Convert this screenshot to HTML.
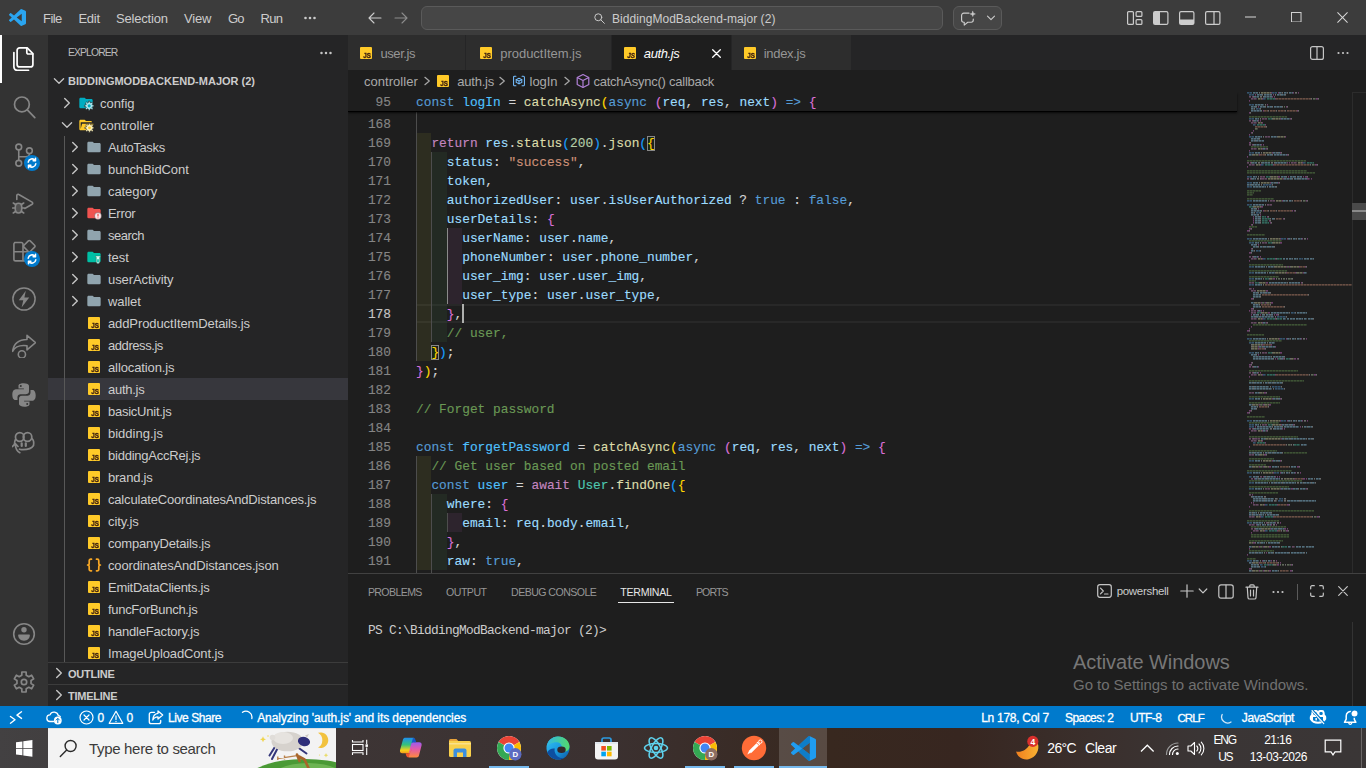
<!DOCTYPE html>
<html lang="en">
<head>
<meta charset="utf-8">
<title>auth.js - BiddingModBackend-major (2) - Visual Studio Code</title>
<style>
*{box-sizing:border-box;margin:0;padding:0}
html,body{width:1366px;height:768px;overflow:hidden;background:#1e1e1e}
body{font-family:"Liberation Sans",sans-serif;font-size:13px;color:#cccccc;position:relative}
.abs{position:absolute}
svg{display:block}
/* ---------- title bar ---------- */
#titlebar{position:absolute;left:0;top:0;width:1366px;height:35px;background:#3c3c3c}
#titlebar .menu{position:absolute;top:1px;height:35px;line-height:35px;font-size:13px;color:#cccccc;white-space:nowrap;letter-spacing:-0.1px}
#cmd{position:absolute;left:421px;top:6px;width:522px;height:24px;background:#464646;border:1px solid #5a5a5a;border-radius:6px}
#cmd span{position:absolute;left:190px;top:1px;line-height:22px;font-size:12px;color:#cccccc;white-space:nowrap;letter-spacing:0.05px}
#chatbtn{position:absolute;left:953px;top:6px;width:49px;height:24px;background:#464646;border:1px solid #5a5a5a;border-radius:6px}
/* ---------- activity bar ---------- */
#activity{position:absolute;left:0;top:35px;width:48px;height:671px;background:#333333}
#activity .ind{position:absolute;left:0;top:0;width:2px;height:48px;background:#ffffff}
#activity .ic{position:absolute;left:12px;width:24px;height:24px}
.badge{position:absolute;width:16px;height:16px;border-radius:8px;background:#007acc}
/* ---------- sidebar ---------- */
#sidebar{position:absolute;left:48px;top:35px;width:300px;height:671px;background:#252526;overflow:hidden}
#sidebar .title{position:absolute;left:20px;top:0;line-height:36px;font-size:10.4px;color:#bbbbbb;letter-spacing:-0.899px}
.sect{position:absolute;left:0;width:300px;height:22px;line-height:22px;font-size:11px;font-weight:700;color:#cccccc;white-space:nowrap}
.sect span{position:absolute;left:20px;top:0}
.row{position:absolute;left:0;width:300px;height:22px;line-height:22px;font-size:13px;color:#cccccc;white-space:nowrap}
.row .lbl{position:absolute;top:1px;letter-spacing:-0.16px}
.row .chev{position:absolute;top:3px;width:16px;height:16px}
.row .fi{position:absolute;top:3px;width:16px;height:16px}
.row.sel{background:#37373d}
.js{position:absolute;top:5px;width:12px;height:12px;background:#ffca28;border-radius:1px}
.js b{-webkit-text-stroke:0.3px;position:absolute;right:0.2px;bottom:-1px;padding:0 1px;font-size:7.4px;line-height:7.6px;font-weight:700;color:#3a1d10;letter-spacing:-0.2px;transform-origin:100% 100%;transform:translateZ(0) scaleX(0.86);font-family:"Liberation Sans",sans-serif}
/* ---------- editor ---------- */
#tabs{position:absolute;left:348px;top:35px;width:1018px;height:35px;background:#252526}
.tab{position:absolute;top:0;height:35px;background:#2d2d2d;border-right:1px solid #252526;line-height:35px;font-size:13px;color:#969696;white-space:nowrap}
.tab.act{background:#1e1e1e;color:#ffffff;font-style:italic}
.tab .t{position:absolute;top:1px}
#crumbs{position:absolute;left:348px;top:70px;width:1018px;height:22px;background:#1e1e1e;line-height:22px;font-size:13px;color:#a9a9a9;white-space:nowrap}
#crumbs span{position:absolute;top:1px;letter-spacing:-0.12px}
#editor{position:absolute;left:348px;top:92px;width:1018px;height:481px;background:#1e1e1e;overflow:hidden}
.ln{-webkit-text-stroke:0.13px;position:absolute;left:0;width:1018px;height:19px;line-height:19px;font-family:"Liberation Mono",monospace;font-size:12.83px;white-space:pre;color:#d4d4d4}
.ln .n{position:absolute;top:1px;left:0;width:43px;text-align:right;color:#858585}
.ln .n.cur{color:#c6c6c6}
.ln .c{position:absolute;left:68px;top:1px}
.ir{position:absolute;top:0;height:19px;width:15.4px}
.k{color:#569cd6}.p{color:#c586c0}.v{color:#9cdcfe}.f{color:#dcdcaa}.m{color:#b5cea8}.s{color:#ce9178}.cm{color:#6a9955}.ty{color:#4ec9b0}.cv{color:#4fc1ff}
.bm{outline:1px solid #888888;outline-offset:-1px;background:rgba(0,100,0,0.1)}
.b1{color:#ffd700}.b2{color:#da70d6}.b3{color:#179fff}
/* ---------- panel ---------- */
#panel{position:absolute;left:348px;top:573px;width:1018px;height:133px;background:#1e1e1e;border-top:1px solid #414141}
#panel .pt{position:absolute;top:7px;line-height:22px;font-size:10.6px;color:#969696;white-space:nowrap;letter-spacing:-0.35px}
#panel .pt.act{color:#e7e7e7}
/* ---------- status bar ---------- */
#status{position:absolute;left:0;top:706px;width:1366px;height:22px;background:#007acc;color:#ffffff;font-size:12px;line-height:22px;white-space:nowrap}
#status span{position:absolute;top:1px;-webkit-text-stroke:0.3px}
/* ---------- task bar ---------- */
#taskbar{position:absolute;left:0;top:728px;width:1366px;height:40px;background:linear-gradient(90deg,#434142 0,#423f40 48px,#3d3535 340px,#3b3131 600px,#38281f 830px,#372620 960px,#3a2f2c 1090px,#3a3535 1200px,#3a3636 1366px);overflow:hidden}
</style>
</head>
<body>
<div id="titlebar">
<svg class="abs" style="left:9px;top:9px" width="17" height="17" viewBox="0 0 100 100"><path d="M96.5 10.8 75.9.9a6.2 6.2 0 0 0-7.1 1.2L29.4 38 12.2 25a4.2 4.2 0 0 0-5.3.2L1.400 30.200a4.200 4.200 0 0 0 0 6.200L16.300 50 1.400 63.600a4.200 4.200 0 0 0 0 6.200l5.500 5a4.200 4.200 0 0 0 5.300.200l17.200-13 39.400 35.900a6.200 6.200 0 0 0 7.100 1.200l20.600-9.900A6.200 6.200 0 0 0 100 83.600V16.400a6.200 6.200 0 0 0-3.500-5.600zM75 72.700 45.100 50 75 27.300z" fill="#2aa5f0"/></svg>
<div class="menu" style="left:43px;letter-spacing:-0.563px">File</div>
<div class="menu" style="left:78.5px;letter-spacing:-0.302px">Edit</div>
<div class="menu" style="left:116px;letter-spacing:-0.198px">Selection</div>
<div class="menu" style="left:184px;letter-spacing:-0.188px">View</div>
<div class="menu" style="left:228px;letter-spacing:-0.822px">Go</div>
<div class="menu" style="left:260.5px;letter-spacing:-0.72px">Run</div>
<svg class="abs" style="left:304px;top:16px" width="12" height="4" viewBox="0 0 12 4"><circle cx="1.500" cy="2" r="1.300" fill="#ccc"/><circle cx="6" cy="2" r="1.300" fill="#ccc"/><circle cx="10.500" cy="2" r="1.300" fill="#ccc"/></svg>
<svg class="abs" style="left:367px;top:10px" width="16" height="16" viewBox="0 0 16 16" fill="none" stroke="#cccccc" stroke-width="1.100" stroke-linecap="round" stroke-linejoin="round"><path d="M14 8H2.200M7 3 2 8l5 5"/></svg>
<svg class="abs" style="left:393px;top:10px" width="16" height="16" viewBox="0 0 16 16" fill="none" stroke="#8c8c8c" stroke-width="1.100" stroke-linecap="round" stroke-linejoin="round"><path d="M2 8h11.800M9 3l5 5-5 5"/></svg>
<div id="cmd"><svg class="abs" style="left:171px;top:5px" width="13" height="13" viewBox="0 0 16 16" fill="none" stroke="#cccccc" stroke-width="1.200" stroke-linecap="round"><circle cx="6.500" cy="6.500" r="4.300"/><path d="M9.700 9.700 14 14"/></svg><span>BiddingModBackend-major (2)</span></div>
<div id="chatbtn"><svg class="abs" style="left:6px;top:3px" width="17" height="17" viewBox="0 0 16 16" fill="none" stroke="#cccccc" stroke-width="1.100" stroke-linecap="round" stroke-linejoin="round"><path d="M8.500 3H3.500a2 2 0 0 0-2 2v4.500a2 2 0 0 0 2 2H4v2.700l3.300-2.700h3.200a2 2 0 0 0 2-2V8.500"/><path d="M12 1.200l.7 1.800 1.800.7-1.800.7-.700 1.800-.700-1.800-1.800-.700 1.800-.700z" fill="#cccccc" stroke-width="0.400"/></svg>
<svg class="abs" style="left:32px;top:7px" width="10" height="8" viewBox="0 0 10 8" fill="none" stroke="#cccccc" stroke-width="1.100" stroke-linecap="round" stroke-linejoin="round"><path d="M1.500 2.200 5 5.700l3.500-3.500"/></svg></div>
<svg class="abs" style="left:1127px;top:11px" width="16" height="14" viewBox="0 0 16 14" fill="none" stroke="#cccccc" stroke-width="1.200"><rect x="0.600" y="0.600" width="5.800" height="12.800" rx="1"/><rect x="9.100" y="0.600" width="5.800" height="4.800" rx="1"/><rect x="9.100" y="8.600" width="5.800" height="4.800" rx="1"/></svg>
<svg class="abs" style="left:1153px;top:11px" width="16" height="14" viewBox="0 0 16 14" fill="none" stroke="#cccccc" stroke-width="1.200"><rect x="0.600" y="0.600" width="14.300" height="12.800" rx="1.500"/><path d="M1 1h6v12H1z" fill="#cccccc" stroke="none"/></svg>
<svg class="abs" style="left:1179px;top:11px" width="16" height="14" viewBox="0 0 16 14" fill="none" stroke="#cccccc" stroke-width="1.200"><rect x="0.600" y="0.600" width="14.300" height="12.800" rx="1.500"/><path d="M1 8.500h14V13H1z" fill="#cccccc" stroke="none"/></svg>
<svg class="abs" style="left:1205px;top:11px" width="16" height="14" viewBox="0 0 16 14" fill="none" stroke="#cccccc" stroke-width="1.200"><rect x="0.600" y="0.600" width="14.300" height="12.800" rx="1.500"/><path d="M9 1v12"/></svg>
<svg class="abs" style="left:1245px;top:15.500px" width="11" height="2" viewBox="0 0 11 2"><rect width="11" height="1" y="0.500" fill="#d8d8d8"/></svg>
<svg class="abs" style="left:1291px;top:11.500px" width="10.500" height="10.500" viewBox="0 0 11 11" fill="none" stroke="#d8d8d8" stroke-width="1"><rect x="0.500" y="0.500" width="10" height="10"/></svg>
<svg class="abs" style="left:1337px;top:11.500px" width="11" height="11" viewBox="0 0 12 12" fill="none" stroke="#d8d8d8" stroke-width="1.100"><path d="M0.500 0.500l11 11M11.500 0.500l-11 11"/></svg>
</div>
<div id="activity">
<div class="ind"></div>
<svg class="ic" style="top:12px" viewBox="0 0 24 24" fill="none" stroke="#ffffff" stroke-width="1.700" stroke-linejoin="round" stroke-linecap="round"><path d="M7.600 0.900h7.600l5.700 5.700v10.800a2.500 2.500 0 0 1-2.500 2.500H7.600a2.500 2.500 0 0 1-2.500-2.500V3.400a2.500 2.500 0 0 1 2.500-2.500z"/><path d="M14.800 1.200v4.300a1.500 1.500 0 0 0 1.500 1.500h4.300"/><path d="M1.900 5.500v14.500a3.300 3.300 0 0 0 3.300 3.300h11.300"/></svg>
<svg class="ic" style="top:60px" viewBox="0 0 24 24" fill="none" stroke="#868686" stroke-width="1.700" stroke-linecap="round"><circle cx="9.900" cy="9.400" r="7.400"/><path d="M15.300 14.800 22.800 22.600"/></svg>
<svg class="ic" style="top:108px" viewBox="0 0 24 24" fill="none" stroke="#868686" stroke-width="1.600" stroke-linecap="round"><circle cx="6.750" cy="4" r="2.900"/><circle cx="6.750" cy="20.250" r="2.900"/><circle cx="17.400" cy="7.750" r="2.900"/><path d="M6.750 7v10.300M17.400 10.700c0 2.200-1.500 3-3.500 3H6.750"/></svg>
<div class="badge" style="left:24px;top:120px"><svg width="16" height="16" viewBox="0 0 16 16" fill="none" stroke="#ffffff" stroke-width="1.500" stroke-linecap="round" stroke-linejoin="round"><path d="M4.200 7.200A3.900 3.900 0 0 1 11.200 5.500M11.800 8.800A3.900 3.900 0 0 1 4.800 10.500"/><path d="M11.500 3.300v2.400H9.100M4.500 12.700v-2.400h2.400"/></svg></div>
<svg class="ic" style="top:156px" viewBox="0 0 24 24" fill="none" stroke="#868686" stroke-width="1.600" stroke-linejoin="round" stroke-linecap="round"><path d="M4.800 8.500V4.600a1.300 1.300 0 0 1 2-1.100l13.300 7.600a1.200 1.200 0 0 1 0 2.100l-7.300 4.300"/><path d="M3.300 15.500a3.200 3.200 0 0 1 6.400 0v3.300a3.200 3.200 0 0 1-6.400 0z" fill="#868686" fill-opacity="0.350"/><path d="M3.300 17H0.700M9.700 17h2.600M3.600 13.500 1.300 12M9.400 13.500l2.300-1.500M3.600 20.300 1.300 22M9.400 20.300l2.300 1.700"/></svg>
<svg class="ic" style="top:204px" viewBox="0 0 24 24" fill="none" stroke="#868686" stroke-width="1.600" stroke-linejoin="round"><path d="M2.600 3.500h6.700a1.700 1.700 0 0 1 1.700 1.700v7.600H1.900V5.200a1.700 1.700 0 0 1 1.700-1.700zM1.900 12.800H11v9.100H3.600a1.700 1.700 0 0 1-1.700-1.700zM11 12.800h7.400a1.700 1.700 0 0 1 1.700 1.700v5.700a1.700 1.700 0 0 1-1.700 1.700H11z"/><path d="M18.200 1.900l4.400 4.400a1.300 1.300 0 0 1 0 1.800l-4.400 4.400a1.300 1.300 0 0 1-1.800 0L12 8.100a1.300 1.300 0 0 1 0-1.800l4.400-4.400a1.300 1.300 0 0 1 1.800 0z"/></svg>
<div class="badge" style="left:24px;top:216px"><svg width="16" height="16" viewBox="0 0 16 16" fill="none" stroke="#ffffff" stroke-width="1.500" stroke-linecap="round" stroke-linejoin="round"><path d="M4.200 7.200A3.900 3.900 0 0 1 11.200 5.500M11.800 8.800A3.900 3.900 0 0 1 4.800 10.500"/><path d="M11.500 3.300v2.400H9.100M4.500 12.700v-2.400h2.400"/></svg></div>
<svg class="ic" style="top:251.500px" viewBox="0 0 24 24" fill="none" stroke="#868686" stroke-width="1.500"><circle cx="12" cy="12" r="11.100"/><path d="M13.800 3.800 6.800 13.300h4.500l-1.700 7.200 7.600-10h-4.800z" fill="#868686" stroke="none"/></svg>
<svg class="ic" style="top:299px" viewBox="0 0 24 24" fill="none" stroke="#868686" stroke-width="1.600" stroke-linejoin="round" stroke-linecap="round"><path d="M15 1.300 23.600 8.600 15 15.900V11.700C8.500 10.900 3.500 11.500 0.600 17.300 1.500 10 6 5.800 15 5.500z"/><circle cx="9.900" cy="20.400" r="3.600"/></svg>
<svg class="ic" style="top:348px" viewBox="0 0 24 24" fill="#868686"><path d="M11.800 0.300c-5.700 0-5.300 2.500-5.300 2.500v2.600h5.400v.8H4.300S0.300 5.700 0.300 11.500s3.200 5.600 3.200 5.600h2v-2.700s-.1-3.200 3.100-3.200h5.400s3 0 3-2.900V3.400s.5-3.100-5.200-3.100zM8.800 2a1 1 0 1 1 0 2 1 1 0 0 1 0-2z"/><path d="M12.200 23.700c5.700 0 5.300-2.500 5.300-2.500v-2.600h-5.400v-.8h7.600s4 .5 4-5.300-3.200-5.600-3.200-5.600h-2v2.700s.1 3.200-3.100 3.200H10s-3 0-3 2.900v4.900s-.5 3.100 5.200 3.100zm3-1.700a1 1 0 1 1 0-2 1 1 0 0 1 0 2z"/></svg>
<svg class="ic" style="top:396px" viewBox="0 0 24 24" fill="none" stroke="#868686" stroke-width="1.700" stroke-linejoin="round" stroke-linecap="round"><circle cx="7.750" cy="6" r="4.300"/><circle cx="15.500" cy="6" r="4.300"/><path d="M3.500 8.500c-.8 1.500-1 3-1 4.500M20 7.500c1.500 1.500 2 4.500 1.500 7-1.500 2.500-6 4.200-10.500 4.200-1.500 0-2.500-.2-3.500-.5"/><path d="M9.700 12.300v2.700M13.800 12.300v2.700" stroke-width="2.200"/><path d="M7.800 21.700c-3-1.500-4.300-4.500-4.500-8.500M0.500 15.500 3.300 12.700 6 15.500"/></svg>
<svg class="ic" style="top:587px" viewBox="0 0 24 24" fill="none" stroke="#868686" stroke-width="1.600"><circle cx="12" cy="12" r="10.300"/><circle cx="12" cy="7.750" r="2.700" fill="#868686" stroke="none"/><path d="M6.750 12.400h10.500a.600.600 0 0 1 .600.600c0 3.200-2.300 5.700-5.850 5.700S6.150 16.200 6.150 13a.600.600 0 0 1 .600-.600z" fill="#868686" stroke="none"/></svg>
<svg class="ic" style="top:635px" viewBox="0 0 24 24" fill="none" stroke="#868686" stroke-width="1.700" stroke-linejoin="round"><circle cx="12" cy="12" r="2.700"/><path d="M9.88 2.02 L14.12 2.02 L14.22 5.15 L16.82 6.65 L19.58 5.17 L21.70 8.85 L19.04 10.50 L19.04 13.50 L21.70 15.15 L19.58 18.83 L16.82 17.35 L14.22 18.85 L14.12 21.98 L9.88 21.98 L9.78 18.85 L7.18 17.35 L4.42 18.83 L2.30 15.15 L4.96 13.50 L4.96 10.50 L2.30 8.85 L4.42 5.17 L7.18 6.65 L9.78 5.15Z"/></svg>
</div>
<div id="sidebar">
<div class="title">EXPLORER</div>
<svg class="abs" style="left:271.500px;top:16px" width="12" height="4" viewBox="0 0 12 4"><circle cx="1.500" cy="2" r="1.250" fill="#c5c5c5"/><circle cx="6" cy="2" r="1.250" fill="#c5c5c5"/><circle cx="10.500" cy="2" r="1.250" fill="#c5c5c5"/></svg>
<div class="sect" style="top:35px"><svg class="abs" width="16" height="16" style="left:3px;top:3px" viewBox="0 0 16 16" fill="none" stroke="#c5c5c5" stroke-width="1.300" stroke-linecap="round" stroke-linejoin="round"><path d="M3.400 5.700 8 10.300 12.600 5.700"/></svg><span>BIDDINGMODBACKEND-MAJOR (2)</span></div>
<div class="row" style="top:57px"><svg class="chev" style="left:11px" viewBox="0 0 16 16" fill="none" stroke="#c5c5c5" stroke-width="1.400" stroke-linecap="round" stroke-linejoin="round"><path d="M5.700 3.400 10.300 8 5.700 12.600"/></svg><svg class="fi" style="left:30px" viewBox="0 0 24 24"><path d="M10 4H4c-1.110 0-2 .890-2 2v12a2 2 0 0 0 2 2h16a2 2 0 0 0 2-2V8c0-1.110-.900-2-2-2h-8l-2-2z" fill="#00acc1"/><path d="M23.91 15.17 L23.91 17.43 L21.86 17.51 L21.23 19.02 L22.62 20.53 L21.03 22.12 L19.52 20.73 L18.01 21.36 L17.93 23.41 L15.67 23.41 L15.59 21.36 L14.08 20.73 L12.57 22.12 L10.98 20.53 L12.37 19.02 L11.74 17.51 L9.69 17.43 L9.69 15.17 L11.74 15.09 L12.37 13.58 L10.98 12.07 L12.57 10.48 L14.08 11.87 L15.59 11.24 L15.67 9.19 L17.93 9.19 L18.01 11.24 L19.52 11.87 L21.03 10.48 L22.62 12.07 L21.23 13.58 L21.86 15.09Z" fill="#a8e8f0" stroke="#252526" stroke-width="0.900"/><circle cx="16.800" cy="16.300" r="2.300" fill="#00acc1"/></svg><span class="lbl" style="left:52px;letter-spacing:-0.034px">config</span></div>
<div class="row" style="top:79px"><svg class="chev" style="left:11px" viewBox="0 0 16 16" fill="none" stroke="#c5c5c5" stroke-width="1.300" stroke-linecap="round" stroke-linejoin="round"><path d="M3.400 5.700 8 10.300 12.600 5.700"/></svg><svg class="fi" style="left:30px" viewBox="0 0 24 24"><path d="M19 20H4c-1.110 0-2-.900-2-2V6c0-1.110.890-2 2-2h6l2 2h7a2 2 0 0 1 2 2H4v10l2.140-8h17.070l-2.280 8.500c-.230.870-1.010 1.500-1.930 1.500z" fill="#ffca28"/><path d="M24.11 15.20 L24.11 17.40 L22.06 17.47 L21.46 18.91 L22.86 20.41 L21.31 21.96 L19.81 20.56 L18.37 21.16 L18.30 23.21 L16.10 23.21 L16.03 21.16 L14.59 20.56 L13.09 21.96 L11.54 20.41 L12.94 18.91 L12.34 17.47 L10.29 17.40 L10.29 15.20 L12.34 15.13 L12.94 13.69 L11.54 12.19 L13.09 10.64 L14.59 12.04 L16.03 11.44 L16.10 9.39 L18.30 9.39 L18.37 11.44 L19.81 12.04 L21.31 10.64 L22.86 12.19 L21.46 13.69 L22.06 15.13Z" fill="#fff3b8" stroke="#252526" stroke-width="0.900"/><circle cx="17.200" cy="16.300" r="2.200" fill="#ffca28"/></svg><span class="lbl" style="left:52px;letter-spacing:0.063px">controller</span></div>
<div class="row" style="top:101px"><svg class="chev" style="left:19px" viewBox="0 0 16 16" fill="none" stroke="#c5c5c5" stroke-width="1.400" stroke-linecap="round" stroke-linejoin="round"><path d="M5.700 3.400 10.300 8 5.700 12.600"/></svg><svg class="fi" style="left:38px" viewBox="0 0 24 24"><path d="M10 4H4c-1.110 0-2 .890-2 2v12a2 2 0 0 0 2 2h16a2 2 0 0 0 2-2V8c0-1.110-.900-2-2-2h-8l-2-2z" fill="#90a4ae"/></svg><span class="lbl" style="left:60px;letter-spacing:-0.354px">AutoTasks</span></div>
<div class="row" style="top:123px"><svg class="chev" style="left:19px" viewBox="0 0 16 16" fill="none" stroke="#c5c5c5" stroke-width="1.400" stroke-linecap="round" stroke-linejoin="round"><path d="M5.700 3.400 10.300 8 5.700 12.600"/></svg><svg class="fi" style="left:38px" viewBox="0 0 24 24"><path d="M10 4H4c-1.110 0-2 .890-2 2v12a2 2 0 0 0 2 2h16a2 2 0 0 0 2-2V8c0-1.110-.900-2-2-2h-8l-2-2z" fill="#90a4ae"/></svg><span class="lbl" style="left:60px;letter-spacing:-0.081px">bunchBidCont</span></div>
<div class="row" style="top:145px"><svg class="chev" style="left:19px" viewBox="0 0 16 16" fill="none" stroke="#c5c5c5" stroke-width="1.400" stroke-linecap="round" stroke-linejoin="round"><path d="M5.700 3.400 10.300 8 5.700 12.600"/></svg><svg class="fi" style="left:38px" viewBox="0 0 24 24"><path d="M10 4H4c-1.110 0-2 .890-2 2v12a2 2 0 0 0 2 2h16a2 2 0 0 0 2-2V8c0-1.110-.900-2-2-2h-8l-2-2z" fill="#90a4ae"/></svg><span class="lbl" style="left:60px;letter-spacing:-0.084px">category</span></div>
<div class="row" style="top:167px"><svg class="chev" style="left:19px" viewBox="0 0 16 16" fill="none" stroke="#c5c5c5" stroke-width="1.400" stroke-linecap="round" stroke-linejoin="round"><path d="M5.700 3.400 10.300 8 5.700 12.600"/></svg><svg class="fi" style="left:38px" viewBox="0 0 24 24"><path d="M10 4H4c-1.110 0-2 .890-2 2v12a2 2 0 0 0 2 2h16a2 2 0 0 0 2-2V8c0-1.110-.900-2-2-2h-8l-2-2z" fill="#ef5350"/><circle cx="18" cy="16.500" r="5.200" fill="#ffe6e9" stroke="#252526" stroke-width="0.500"/><path d="M18 13.200v4M18 18.700v1.300" stroke="#ef5350" stroke-width="1.900"/></svg><span class="lbl" style="left:60px;letter-spacing:-0.298px">Error</span></div>
<div class="row" style="top:189px"><svg class="chev" style="left:19px" viewBox="0 0 16 16" fill="none" stroke="#c5c5c5" stroke-width="1.400" stroke-linecap="round" stroke-linejoin="round"><path d="M5.700 3.400 10.300 8 5.700 12.600"/></svg><svg class="fi" style="left:38px" viewBox="0 0 24 24"><path d="M10 4H4c-1.110 0-2 .890-2 2v12a2 2 0 0 0 2 2h16a2 2 0 0 0 2-2V8c0-1.110-.900-2-2-2h-8l-2-2z" fill="#90a4ae"/></svg><span class="lbl" style="left:60px;letter-spacing:-0.522px">search</span></div>
<div class="row" style="top:211px"><svg class="chev" style="left:19px" viewBox="0 0 16 16" fill="none" stroke="#c5c5c5" stroke-width="1.400" stroke-linecap="round" stroke-linejoin="round"><path d="M5.700 3.400 10.300 8 5.700 12.600"/></svg><svg class="fi" style="left:38px" viewBox="0 0 24 24"><path d="M10 4H4c-1.110 0-2 .890-2 2v12a2 2 0 0 0 2 2h16a2 2 0 0 0 2-2V8c0-1.110-.900-2-2-2h-8l-2-2z" fill="#00bfa5"/><path d="M14.500 10.500h7v1.800h-1v7.200a2.500 2.500 0 0 1-5 0v-7.200h-1z" fill="#d2fff4" stroke="#252526" stroke-width="0.400"/><path d="M16.800 15.500h2.400v3.800a1.200 1.200 0 0 1-2.400 0z" fill="#00bfa5"/></svg><span class="lbl" style="left:60px;letter-spacing:-0.042px">test</span></div>
<div class="row" style="top:233px"><svg class="chev" style="left:19px" viewBox="0 0 16 16" fill="none" stroke="#c5c5c5" stroke-width="1.400" stroke-linecap="round" stroke-linejoin="round"><path d="M5.700 3.400 10.300 8 5.700 12.600"/></svg><svg class="fi" style="left:38px" viewBox="0 0 24 24"><path d="M10 4H4c-1.110 0-2 .890-2 2v12a2 2 0 0 0 2 2h16a2 2 0 0 0 2-2V8c0-1.110-.900-2-2-2h-8l-2-2z" fill="#90a4ae"/></svg><span class="lbl" style="left:60px;letter-spacing:-0.089px">userActivity</span></div>
<div class="row" style="top:255px"><svg class="chev" style="left:19px" viewBox="0 0 16 16" fill="none" stroke="#c5c5c5" stroke-width="1.400" stroke-linecap="round" stroke-linejoin="round"><path d="M5.700 3.400 10.300 8 5.700 12.600"/></svg><svg class="fi" style="left:38px" viewBox="0 0 24 24"><path d="M10 4H4c-1.110 0-2 .890-2 2v12a2 2 0 0 0 2 2h16a2 2 0 0 0 2-2V8c0-1.110-.900-2-2-2h-8l-2-2z" fill="#90a4ae"/></svg><span class="lbl" style="left:60px;letter-spacing:-0.075px">wallet</span></div>
<div class="row" style="top:277px"><div class="js" style="left:40px"><b>JS</b></div><span class="lbl" style="left:60px;letter-spacing:-0.109px">addProductItemDetails.js</span></div>
<div class="row" style="top:299px"><div class="js" style="left:40px"><b>JS</b></div><span class="lbl" style="left:60px;letter-spacing:-0.435px">address.js</span></div>
<div class="row" style="top:321px"><div class="js" style="left:40px"><b>JS</b></div><span class="lbl" style="left:60px;letter-spacing:-0.118px">allocation.js</span></div>
<div class="row sel" style="top:343px"><div class="js" style="left:40px"><b>JS</b></div><span class="lbl" style="left:60px;letter-spacing:-0.273px">auth.js</span></div>
<div class="row" style="top:365px"><div class="js" style="left:40px"><b>JS</b></div><span class="lbl" style="left:60px;letter-spacing:-0.247px">basicUnit.js</span></div>
<div class="row" style="top:387px"><div class="js" style="left:40px"><b>JS</b></div><span class="lbl" style="left:60px;letter-spacing:-0.004px">bidding.js</span></div>
<div class="row" style="top:409px"><div class="js" style="left:40px"><b>JS</b></div><span class="lbl" style="left:60px;letter-spacing:-0.232px">biddingAccRej.js</span></div>
<div class="row" style="top:431px"><div class="js" style="left:40px"><b>JS</b></div><span class="lbl" style="left:60px;letter-spacing:-0.219px">brand.js</span></div>
<div class="row" style="top:453px"><div class="js" style="left:40px"><b>JS</b></div><span class="lbl" style="left:60px;letter-spacing:-0.181px">calculateCoordinatesAndDistances.js</span></div>
<div class="row" style="top:475px"><div class="js" style="left:40px"><b>JS</b></div><span class="lbl" style="left:60px;letter-spacing:-0.121px">city.js</span></div>
<div class="row" style="top:497px"><div class="js" style="left:40px"><b>JS</b></div><span class="lbl" style="left:60px;letter-spacing:-0.182px">companyDetails.js</span></div>
<div class="row" style="top:519px"><svg class="fi" style="left:38px" viewBox="0 0 16 16" fill="none" stroke="#f9a825" stroke-width="1.700" stroke-linecap="round" stroke-linejoin="round"><path d="M5.500 2.200H4.800a1.600 1.600 0 0 0-1.600 1.600v2.400c0 .900-.700 1.800-1.600 1.800.900 0 1.600.900 1.600 1.800v2.400a1.600 1.600 0 0 0 1.600 1.600h.700M10.500 2.200h.700a1.600 1.600 0 0 1 1.600 1.600v2.400c0 .900.700 1.800 1.600 1.800-.900 0-1.600.900-1.600 1.800v2.400a1.600 1.600 0 0 1-1.600 1.600h-.700"/></svg><span class="lbl" style="left:60px;letter-spacing:-0.153px">coordinatesAndDistances.json</span></div>
<div class="row" style="top:541px"><div class="js" style="left:40px"><b>JS</b></div><span class="lbl" style="left:60px;letter-spacing:-0.267px">EmitDataClients.js</span></div>
<div class="row" style="top:563px"><div class="js" style="left:40px"><b>JS</b></div><span class="lbl" style="left:60px;letter-spacing:-0.302px">funcForBunch.js</span></div>
<div class="row" style="top:585px"><div class="js" style="left:40px"><b>JS</b></div><span class="lbl" style="left:60px;letter-spacing:-0.201px">handleFactory.js</span></div>
<div class="row" style="top:607px"><div class="js" style="left:40px"><b>JS</b></div><span class="lbl" style="left:60px;letter-spacing:-0.122px">ImageUploadCont.js</span></div>
<div class="abs" style="left:16px;top:101px;width:1px;height:528px;background:#585858"></div>
<div class="sect" style="top:627px;height:22px;background:#252526;border-top:1px solid #3c3c3c"><svg class="abs" width="16" height="16" style="left:3px;top:2px" viewBox="0 0 16 16" fill="none" stroke="#c5c5c5" stroke-width="1.400" stroke-linecap="round" stroke-linejoin="round"><path d="M5.700 3.400 10.300 8 5.700 12.600"/></svg><span style="top:0;letter-spacing:-0.250px">OUTLINE</span></div>
<div class="sect" style="top:649px;height:22px;background:#252526;border-top:1px solid #3c3c3c"><svg class="abs" width="16" height="16" style="left:3px;top:2px" viewBox="0 0 16 16" fill="none" stroke="#c5c5c5" stroke-width="1.400" stroke-linecap="round" stroke-linejoin="round"><path d="M5.700 3.400 10.300 8 5.700 12.600"/></svg><span style="top:0;letter-spacing:-0.250px">TIMELINE</span></div>
</div>
<div id="tabs">
<div class="tab" style="left:0;width:118px"><div class="js" style="left:12px;top:12px;width:12px;height:12px"><b>JS</b></div><span class="t" style="left:32.4px;letter-spacing:-0.397px">user.js</span></div>
<div class="tab" style="left:118px;width:146px"><div class="js" style="left:14px;top:12px;width:12px;height:12px"><b>JS</b></div><span class="t" style="left:34.3px;letter-spacing:-0.04px">productItem.js</span></div>
<div class="tab act" style="left:264px;width:120px"><div class="js" style="left:12px;top:12px;width:12px;height:12px"><b>JS</b></div><span class="t" style="left:31.8px;letter-spacing:-0.387px">auth.js</span><svg class="abs" style="left:100px;top:13.500px" width="9" height="9" viewBox="0 0 9 9" fill="none" stroke="#ffffff" stroke-width="1.300" stroke-linecap="round"><path d="M0.700 0.700l7.600 7.600M8.300 0.700 0.700 8.300"/></svg></div>
<div class="tab" style="left:384px;width:120px"><div class="js" style="left:12px;top:12px;width:12px;height:12px"><b>JS</b></div><span class="t" style="left:31.7px;letter-spacing:-0.297px">index.js</span></div>
<svg class="abs" style="left:961px;top:10px" width="16" height="16" viewBox="0 0 16 16" fill="none" stroke="#c5c5c5" stroke-width="1.200"><rect x="1.600" y="1.600" width="12.800" height="12.800" rx="2"/><path d="M8 1.600v12.800"/></svg>
<svg class="abs" style="left:989px;top:16px" width="12" height="4" viewBox="0 0 12 4"><circle cx="1.500" cy="2" r="1.100" fill="#c5c5c5"/><circle cx="6" cy="2" r="1.100" fill="#c5c5c5"/><circle cx="10.500" cy="2" r="1.100" fill="#c5c5c5"/></svg>
</div>
<div id="crumbs">
<span style="left:16.0px;letter-spacing:0.033px">controller</span><svg class="abs" style="left:71px;top:3px" width="16" height="16" viewBox="0 0 16 16" fill="none" stroke="#a9a9a9" stroke-width="1.200" stroke-linecap="round" stroke-linejoin="round"><path d="M5.900 4.300 10.300 8 5.900 11.700"/></svg><div class="js" style="left:89px;top:5px;width:12px;height:12px"><b>JS</b></div><span style="left:109.3px;letter-spacing:-0.23px">auth.js</span><svg class="abs" style="left:146px;top:3px" width="16" height="16" viewBox="0 0 16 16" fill="none" stroke="#a9a9a9" stroke-width="1.200" stroke-linecap="round" stroke-linejoin="round"><path d="M5.900 4.300 10.300 8 5.900 11.700"/></svg><svg class="abs" style="left:164px;top:4px" width="14" height="14" viewBox="0 0 16 16" fill="none" stroke="#75beff" stroke-width="1.200" stroke-linecap="round" stroke-linejoin="round"><path d="M4.500 2.500H3a1.200 1.200 0 0 0-1.200 1.200v8.600A1.200 1.200 0 0 0 3 13.500h1.500M11.500 2.500H13a1.200 1.200 0 0 1 1.200 1.200v8.600a1.200 1.200 0 0 1-1.200 1.200h-1.500"/><path d="M8 4.800l3.200 1.600v3.200L8 11.200 4.800 9.600V6.400z"/><path d="M4.800 6.400 8 8l3.200-1.600M8 8v3.200"/></svg><span style="left:181.6px;letter-spacing:-0.081px">logIn</span><svg class="abs" style="left:211px;top:3px" width="16" height="16" viewBox="0 0 16 16" fill="none" stroke="#a9a9a9" stroke-width="1.200" stroke-linecap="round" stroke-linejoin="round"><path d="M5.900 4.300 10.300 8 5.900 11.700"/></svg><svg class="abs" style="left:227px;top:3px" width="16" height="16" viewBox="0 0 16 16" fill="none" stroke="#b180d7" stroke-width="1.200" stroke-linejoin="round"><path d="M8 1.500l5.800 3v7L8 14.500l-5.800-3v-7z"/><path d="M2.200 4.500 8 7.500l5.800-3M8 7.500v7"/></svg><span style="left:245.5px;letter-spacing:-0.249px">catchAsync() callback</span>
</div>
<div id="editor">
<div class="abs" style="left:68px;top:212px;width:824px;height:19px;border-top:2px solid #282828;border-bottom:2px solid #282828"></div>
<div class="ln" style="top:22px"><span class="n">168</span></div>
<div class="ln" style="top:41px"><span class="n">169</span><span class="ir" style="left:68.0px;background:rgba(255,255,64,0.07)"></span><span class="c" style="left:83.4px"><span class="p">return</span> <span class="v">res</span>.<span class="f">status</span><span class="b3">(</span><span class="m">200</span><span class="b3">)</span>.<span class="f">json</span><span class="b3">(</span><span class="b1 bm">{</span></span></div>
<div class="ln" style="top:60px"><span class="n">170</span><span class="ir" style="left:68.0px;background:rgba(255,255,64,0.07)"></span><span class="ir" style="left:83.4px;background:rgba(127,255,127,0.055)"></span><span class="c" style="left:98.8px"><span class="v">status</span>: <span class="s">"success"</span>,</span></div>
<div class="ln" style="top:79px"><span class="n">171</span><span class="ir" style="left:68.0px;background:rgba(255,255,64,0.07)"></span><span class="ir" style="left:83.4px;background:rgba(127,255,127,0.055)"></span><span class="c" style="left:98.8px"><span class="v">token</span>,</span></div>
<div class="ln" style="top:98px"><span class="n">172</span><span class="ir" style="left:68.0px;background:rgba(255,255,64,0.07)"></span><span class="ir" style="left:83.4px;background:rgba(127,255,127,0.055)"></span><span class="c" style="left:98.8px"><span class="v">authorizedUser</span>: <span class="v">user</span>.<span class="v">isUserAuthorized</span> ? <span class="k">true</span> : <span class="k">false</span>,</span></div>
<div class="ln" style="top:117px"><span class="n">173</span><span class="ir" style="left:68.0px;background:rgba(255,255,64,0.07)"></span><span class="ir" style="left:83.4px;background:rgba(127,255,127,0.055)"></span><span class="c" style="left:98.8px"><span class="v">userDetails</span>: <span class="b2">{</span></span></div>
<div class="ln" style="top:136px"><span class="n">174</span><span class="ir" style="left:68.0px;background:rgba(255,255,64,0.07)"></span><span class="ir" style="left:83.4px;background:rgba(127,255,127,0.055)"></span><span class="ir" style="left:98.8px;background:rgba(255,127,255,0.07)"></span><span class="c" style="left:114.2px"><span class="v">userName</span>: <span class="v">user</span>.<span class="v">name</span>,</span></div>
<div class="ln" style="top:155px"><span class="n">175</span><span class="ir" style="left:68.0px;background:rgba(255,255,64,0.07)"></span><span class="ir" style="left:83.4px;background:rgba(127,255,127,0.055)"></span><span class="ir" style="left:98.8px;background:rgba(255,127,255,0.07)"></span><span class="c" style="left:114.2px"><span class="v">phoneNumber</span>: <span class="v">user</span>.<span class="v">phone_number</span>,</span></div>
<div class="ln" style="top:174px"><span class="n">176</span><span class="ir" style="left:68.0px;background:rgba(255,255,64,0.07)"></span><span class="ir" style="left:83.4px;background:rgba(127,255,127,0.055)"></span><span class="ir" style="left:98.8px;background:rgba(255,127,255,0.07)"></span><span class="c" style="left:114.2px"><span class="v">user_img</span>: <span class="v">user</span>.<span class="v">user_img</span>,</span></div>
<div class="ln" style="top:193px"><span class="n">177</span><span class="ir" style="left:68.0px;background:rgba(255,255,64,0.07)"></span><span class="ir" style="left:83.4px;background:rgba(127,255,127,0.055)"></span><span class="ir" style="left:98.8px;background:rgba(255,127,255,0.07)"></span><span class="c" style="left:114.2px"><span class="v">user_type</span>: <span class="v">user</span>.<span class="v">user_type</span>,</span></div>
<div class="ln" style="top:212px"><span class="n cur">178</span><span class="ir" style="left:68.0px;background:rgba(255,255,64,0.07)"></span><span class="ir" style="left:83.4px;background:rgba(127,255,127,0.055)"></span><span class="c" style="left:98.8px"><span class="b2">}</span>,</span></div>
<div class="ln" style="top:231px"><span class="n">179</span><span class="ir" style="left:68.0px;background:rgba(255,255,64,0.07)"></span><span class="ir" style="left:83.4px;background:rgba(127,255,127,0.055)"></span><span class="c" style="left:98.8px"><span class="cm">// user,</span></span></div>
<div class="ln" style="top:250px"><span class="n">180</span><span class="ir" style="left:68.0px;background:rgba(255,255,64,0.07)"></span><span class="c" style="left:83.4px"><span class="b1 bm">}</span><span class="b3">)</span>;</span></div>
<div class="ln" style="top:269px"><span class="n">181</span><span class="c" style="left:68.0px"><span class="b2">}</span><span class="b1">)</span>;</span></div>
<div class="ln" style="top:288px"><span class="n">182</span></div>
<div class="ln" style="top:307px"><span class="n">183</span><span class="c" style="left:68.0px"><span class="cm">// Forget password</span></span></div>
<div class="ln" style="top:326px"><span class="n">184</span></div>
<div class="ln" style="top:345px"><span class="n">185</span><span class="c" style="left:68.0px"><span class="k">const</span> <span class="cv">forgetPassword</span> = <span class="f">catchAsync</span><span class="b1">(</span><span class="k">async</span> <span class="b2">(</span><span class="v">req</span>, <span class="v">res</span>, <span class="v">next</span><span class="b2">)</span> <span class="k">=&gt;</span> <span class="b2">{</span></span></div>
<div class="ln" style="top:364px"><span class="n">186</span><span class="ir" style="left:68.0px;background:rgba(255,255,64,0.07)"></span><span class="c" style="left:83.4px"><span class="cm">// Get user based on posted email</span></span></div>
<div class="ln" style="top:383px"><span class="n">187</span><span class="ir" style="left:68.0px;background:rgba(255,255,64,0.07)"></span><span class="c" style="left:83.4px"><span class="k">const</span> <span class="cv">user</span> = <span class="p">await</span> <span class="ty">User</span>.<span class="f">findOne</span><span class="b3">(</span><span class="b1">{</span></span></div>
<div class="ln" style="top:402px"><span class="n">188</span><span class="ir" style="left:68.0px;background:rgba(255,255,64,0.07)"></span><span class="ir" style="left:83.4px;background:rgba(127,255,127,0.055)"></span><span class="c" style="left:98.8px"><span class="v">where</span>: <span class="b2">{</span></span></div>
<div class="ln" style="top:421px"><span class="n">189</span><span class="ir" style="left:68.0px;background:rgba(255,255,64,0.07)"></span><span class="ir" style="left:83.4px;background:rgba(127,255,127,0.055)"></span><span class="ir" style="left:98.8px;background:rgba(255,127,255,0.07)"></span><span class="c" style="left:114.2px"><span class="v">email</span>: <span class="v">req</span>.<span class="v">body</span>.<span class="v">email</span>,</span></div>
<div class="ln" style="top:440px"><span class="n">190</span><span class="ir" style="left:68.0px;background:rgba(255,255,64,0.07)"></span><span class="ir" style="left:83.4px;background:rgba(127,255,127,0.055)"></span><span class="c" style="left:98.8px"><span class="b2">}</span>,</span></div>
<div class="ln" style="top:459px"><span class="n">191</span><span class="ir" style="left:68.0px;background:rgba(255,255,64,0.07)"></span><span class="ir" style="left:83.4px;background:rgba(127,255,127,0.055)"></span><span class="c" style="left:98.8px"><span class="v">raw</span>: <span class="k">true</span>,</span></div>
<div class="abs" style="left:68px;top:3px;width:1px;height:266px;background:#4d4d4d"></div>
<div class="abs" style="left:83px;top:60px;width:1px;height:190px;background:#4d4d4d"></div>
<div class="abs" style="left:99px;top:136px;width:1px;height:76px;background:#8a8a8a"></div>
<div class="abs" style="left:68px;top:364px;width:1px;height:133px;background:#4d4d4d"></div>
<div class="abs" style="left:83px;top:402px;width:1px;height:95px;background:#4d4d4d"></div>
<div class="abs" style="left:99px;top:421px;width:1px;height:19px;background:#4d4d4d"></div>
<div class="abs" style="left:114.2px;top:212px;width:2px;height:19px;background:#aeafad"></div>
<div class="abs" style="left:0;top:0;width:889px;height:19px;background:#1e1e1e;box-shadow:0 1px 0 0 #000000,0 2px 2px 0 rgba(0,0,0,0.700)"></div>
<div class="ln" style="top:0"><span class="n">95</span><span class="c"><span class="k">const</span> <span class="cv">logIn</span> = <span class="f">catchAsync</span><span class="b1">(</span><span class="k">async</span> <span class="b2">(</span><span class="v">req</span>, <span class="v">res</span>, <span class="v">next</span><span class="b2">)</span> <span class="k">=&gt;</span> <span class="b2">{</span></span></div>
<!--MM0--><svg class="abs" style="left:898.8px;top:0" width="106" height="481" viewBox="0 0 106 481" fill="none" stroke-width="1" opacity="0.700" stroke-dasharray="2.600 0.400"><path stroke="#569cd6" d="M0 0.9h5M25 0.9h5M2 2.9h5M16 6.9h3M2 12.9h5M9 16.9h4M2 26.9h5M6 32.9h3M2 44.9h5M2 60.9h5M56 70.9h3M14 72.9h3M0 84.9h5M0 90.9h5M16 92.9h9M0 94.9h5M0 108.9h5M0 112.9h5M9 120.9h4M0 146.9h5M34 146.9h5M2 150.9h5M9 158.9h4M16 166.9h3M52 166.9h4M2 174.9h5M2 180.9h5M2 186.9h5M2 192.9h5M44 220.9h4M30 224.9h9M16 226.9h3M0 246.9h5M33 246.9h5M2 250.9h5M2 260.9h5M16 282.9h3M25 294.9h9M28 296.9h9M2 306.9h5M0 328.9h5M34 328.9h5M2 332.9h5M2 334.9h5M6 350.9h3M2 368.9h5M0 380.9h5M27 380.9h5M2 384.9h3M2 390.9h5M2 396.9h5M32 406.9h4M31 408.9h5M18 412.9h3M14 424.9h3M0 430.9h5M18 438.9h3M0 468.9h5M13 472.9h3M14 474.9h4"/><path stroke="#9cdcfe" d="M6 0.9h5M32 0.9h3M37 0.9h3M42 0.9h4M10 2.9h5M17 2.9h8M30 2.9h3M34 2.9h4M7 4.9h5M17 4.9h8M8 12.9h9M4 14.9h5M13 14.9h5M20 14.9h5M27 14.9h8M4 16.9h3M4 18.9h10M8 26.9h4M34 26.9h9M7 28.9h4M8 44.9h7M24 44.9h6M4 46.9h8M4 48.9h4M9 48.9h8M7 52.9h7M16 56.9h3M8 60.9h5M26 60.9h4M31 60.9h2M2 62.9h3M20 62.9h5M27 62.9h13M5 70.9h5M15 70.9h8M28 70.9h12M6 84.9h4M34 84.9h5M43 84.9h5M50 84.9h5M5 86.9h4M37 86.9h8M47 86.9h4M52 86.9h8M6 90.9h5M24 90.9h4M29 90.9h2M0 92.9h4M5 92.9h8M6 94.9h13M22 94.9h7M6 108.9h14M36 108.9h4M42 108.9h3M6 112.9h11M4 116.9h5M4 118.9h10M4 120.9h3M4 122.9h7M8 124.9h5M8 126.9h5M25 126.9h2M8 128.9h5M8 130.9h5M6 146.9h14M41 146.9h3M46 146.9h3M51 146.9h4M8 150.9h4M4 152.9h5M6 154.9h5M13 154.9h3M17 154.9h4M22 154.9h5M4 158.9h3M7 164.9h4M36 166.9h2M39 166.9h2M42 166.9h4M47 166.9h4M57 166.9h5M63 166.9h4M8 174.9h10M21 174.9h6M8 180.9h11M22 180.9h6M57 180.9h3M8 186.9h7M22 190.9h18M42 190.9h11M8 192.9h7M6 200.9h5M13 200.9h4M18 200.9h5M6 202.9h7M6 204.9h7M4 210.9h3M6 212.9h6M6 214.9h7M11 218.9h3M24 220.9h18M50 220.9h10M6 222.9h5M15 222.9h2M19 222.9h4M24 222.9h2M4 224.9h4M9 224.9h18M36 226.9h3M40 226.9h2M43 226.9h5M49 226.9h7M57 226.9h3M61 226.9h5M16 230.9h3M6 246.9h13M40 246.9h3M45 246.9h3M50 246.9h4M8 250.9h11M22 250.9h6M12 254.9h3M16 254.9h6M23 254.9h5M8 260.9h4M4 262.9h5M6 264.9h18M26 264.9h11M6 266.9h20M34 266.9h2M7 274.9h4M7 280.9h4M2 290.9h4M7 290.9h8M18 290.9h3M22 290.9h4M27 290.9h8M2 294.9h4M7 294.9h15M2 296.9h4M7 296.9h18M8 300.9h4M8 306.9h5M26 306.9h4M31 306.9h2M2 312.9h3M4 314.9h6M4 316.9h5M6 328.9h14M41 328.9h3M46 328.9h3M51 328.9h4M8 332.9h4M35 332.9h3M39 332.9h4M44 332.9h2M10 334.9h15M27 334.9h8M37 334.9h15M57 334.9h3M61 334.9h4M7 336.9h15M27 336.9h8M16 338.9h3M14 346.9h4M35 346.9h3M39 346.9h4M44 346.9h15M61 346.9h4M66 346.9h1M54 352.9h6M2 360.9h4M7 360.9h8M18 360.9h3M22 360.9h4M27 360.9h8M8 362.9h4M8 368.9h5M26 368.9h4M31 368.9h2M2 374.9h3M25 374.9h6M44 374.9h5M6 380.9h7M34 380.9h3M39 380.9h3M44 380.9h4M6 384.9h5M17 384.9h3M21 384.9h7M8 386.9h3M12 386.9h7M20 386.9h13M61 386.9h5M69 386.9h4M8 390.9h13M24 390.9h3M28 390.9h7M36 390.9h13M53 390.9h3M57 390.9h7M65 390.9h3M8 396.9h7M34 396.9h3M38 396.9h6M46 396.9h5M53 396.9h6M5 404.9h11M6 406.9h11M18 406.9h9M6 408.9h11M18 408.9h8M41 408.9h11M53 408.9h16M2 420.9h3M6 420.9h4M13 420.9h11M2 422.9h3M6 422.9h6M13 422.9h4M20 422.9h11M6 430.9h10M23 430.9h5M10 432.9h3M15 432.9h3M20 432.9h4M9 436.9h5M24 436.9h3M28 436.9h4M33 436.9h4M10 450.9h3M14 450.9h4M21 450.9h11M2 454.9h3M25 454.9h7M41 454.9h3M49 454.9h5M55 454.9h3M59 454.9h8M2 460.9h6M9 460.9h7M21 460.9h5M28 460.9h14M44 460.9h13M59 460.9h1M6 468.9h6M16 468.9h3M21 468.9h3M2 470.9h3M4 472.9h7M4 474.9h8M2 478.9h3M25 478.9h6"/><path stroke="#d4d4d4" d="M12 0.9h1M35 0.9h1M40 0.9h1M48 0.9h2M15 2.9h1M28 2.9h1M33 2.9h1M38 2.9h1M6 4.9h1M13 4.9h2M16 4.9h1M64 6.9h1M71 6.9h1M18 12.9h1M9 14.9h1M18 14.9h1M25 14.9h1M35 14.9h1M40 14.9h1M7 16.9h1M13 16.9h1M14 18.9h1M21 18.9h1M29 18.9h1M38 18.9h1M51 18.9h1M3 20.9h1M13 26.9h1M25 26.9h1M44 26.9h1M6 28.9h1M19 34.9h1M5 40.9h1M16 44.9h1M30 44.9h1M12 46.9h1M8 48.9h1M3 50.9h1M6 52.9h1M20 56.9h1M14 60.9h1M30 60.9h1M34 60.9h1M5 62.9h1M18 62.9h1M25 62.9h1M41 62.9h1M4 70.9h1M11 70.9h2M14 70.9h1M24 70.9h2M27 70.9h1M63 72.9h1M70 72.9h1M11 84.9h1M23 84.9h1M39 84.9h1M48 84.9h1M60 84.9h1M4 86.9h1M10 86.9h2M13 86.9h1M45 86.9h1M51 86.9h1M12 90.9h1M28 90.9h1M32 90.9h1M4 92.9h1M14 92.9h1M25 92.9h1M20 94.9h1M29 94.9h1M21 108.9h1M40 108.9h1M45 108.9h1M54 108.9h1M60 108.9h1M18 112.9h1M6 114.9h1M9 116.9h1M14 118.9h1M21 118.9h1M29 118.9h1M48 118.9h1M7 120.9h1M13 120.9h1M11 122.9h1M13 124.9h1M21 124.9h1M13 126.9h1M23 126.9h1M27 126.9h1M37 126.9h1M13 128.9h1M23 128.9h1M13 130.9h1M24 130.9h1M5 132.9h1M4 136.9h1M2 138.9h1M21 146.9h1M44 146.9h1M49 146.9h1M57 146.9h2M13 150.9h1M25 150.9h1M9 152.9h1M11 154.9h1M16 154.9h1M21 154.9h1M27 154.9h1M5 156.9h1M7 158.9h1M13 158.9h1M4 160.9h1M6 164.9h1M29 166.9h1M19 174.9h1M27 174.9h1M43 174.9h1M59 174.9h1M20 180.9h1M28 180.9h1M49 180.9h1M16 186.9h1M22 186.9h1M29 186.9h1M34 186.9h1M39 186.9h1M45 186.9h1M12 190.9h1M40 190.9h1M55 190.9h1M16 192.9h1M11 200.9h1M17 200.9h1M23 200.9h1M13 202.9h1M61 202.9h1M13 204.9h1M6 206.9h1M7 210.9h1M19 210.9h1M12 212.9h1M23 212.9h1M13 214.9h1M37 214.9h1M6 216.9h1M14 220.9h1M42 220.9h1M48 220.9h1M11 222.9h1M17 222.9h1M23 222.9h1M31 222.9h1M8 224.9h1M28 224.9h1M39 224.9h1M29 226.9h1M66 226.9h1M20 230.9h1M2 238.9h1M20 246.9h1M43 246.9h1M48 246.9h1M56 246.9h2M20 250.9h1M4 252.9h1M4 254.9h1M15 254.9h1M22 254.9h1M4 256.9h1M18 256.9h1M13 260.9h1M25 260.9h1M9 262.9h1M24 264.9h1M37 264.9h1M26 266.9h1M33 266.9h1M37 266.9h1M43 266.9h1M51 266.9h1M5 270.9h1M4 272.9h1M6 274.9h1M6 280.9h1M62 282.9h1M69 282.9h1M6 290.9h1M16 290.9h1M21 290.9h1M26 290.9h1M35 290.9h1M6 294.9h1M23 294.9h1M34 294.9h1M6 296.9h1M26 296.9h1M37 296.9h1M12 300.9h1M19 300.9h1M14 306.9h1M30 306.9h1M34 306.9h1M5 312.9h1M17 312.9h1M10 314.9h1M21 314.9h1M9 316.9h1M4 318.9h1M2 320.9h1M21 328.9h1M44 328.9h1M49 328.9h1M57 328.9h2M13 332.9h1M25 332.9h1M38 332.9h1M43 332.9h1M47 332.9h1M25 334.9h1M35 334.9h1M55 334.9h1M60 334.9h1M65 334.9h1M6 336.9h1M23 336.9h2M26 336.9h1M20 338.9h1M6 346.9h1M18 346.9h1M38 346.9h1M43 346.9h1M59 346.9h1M65 346.9h1M39 352.9h1M44 352.9h1M46 352.9h1M6 360.9h1M16 360.9h1M21 360.9h1M26 360.9h1M35 360.9h1M12 362.9h1M19 362.9h1M14 368.9h1M30 368.9h1M34 368.9h1M5 374.9h1M17 374.9h1M31 374.9h1M42 374.9h1M52 374.9h1M14 380.9h1M37 380.9h1M42 380.9h1M50 380.9h2M11 384.9h1M20 384.9h1M11 386.9h1M19 386.9h1M34 386.9h2M67 386.9h1M73 386.9h1M22 390.9h1M27 390.9h1M35 390.9h1M50 390.9h2M56 390.9h1M64 390.9h1M68 390.9h1M16 396.9h1M37 396.9h1M51 396.9h1M60 396.9h1M4 404.9h1M17 404.9h2M17 406.9h1M28 406.9h3M37 406.9h2M17 408.9h1M27 408.9h3M37 408.9h2M40 408.9h1M52 408.9h1M42 412.9h1M5 420.9h1M11 420.9h1M24 420.9h1M5 422.9h1M12 422.9h1M18 422.9h1M31 422.9h1M65 424.9h1M72 424.9h1M17 430.9h1M20 430.9h3M30 430.9h2M13 432.9h1M18 432.9h1M26 432.9h2M8 436.9h1M14 436.9h1M27 436.9h1M32 436.9h1M34 438.9h1M41 438.9h1M8 450.9h1M13 450.9h1M19 450.9h1M32 450.9h1M5 454.9h1M17 454.9h1M32 454.9h1M34 454.9h1M8 460.9h1M17 460.9h1M26 460.9h1M42 460.9h1M57 460.9h1M13 468.9h1M19 468.9h1M26 468.9h2M5 470.9h1M18 470.9h1M31 470.9h1M11 472.9h1M26 472.9h1M33 472.9h1M38 472.9h1M45 472.9h1M12 474.9h1M18 474.9h1M4 476.9h1M5 478.9h1M17 478.9h1M31 478.9h1M45 478.9h1"/><path stroke="#dcdcaa" d="M14 0.9h10M11 6.9h4M26 26.9h7M11 30.9h4M31 44.9h7M11 56.9h4M16 60.9h9M6 62.9h6M51 70.9h4M9 72.9h4M24 84.9h7M21 86.9h15M14 90.9h9M29 108.9h6M7 114.9h7M23 146.9h10M26 150.9h7M11 166.9h4M28 174.9h11M44 174.9h8M29 180.9h10M50 180.9h6M23 186.9h3M13 190.9h6M10 198.9h9M8 210.9h6M20 210.9h4M15 220.9h6M11 226.9h4M11 230.9h4M22 246.9h10M5 252.9h10M5 254.9h6M5 256.9h6M26 260.9h7M44 266.9h3M11 282.9h4M13 300.9h4M16 306.9h9M6 312.9h6M18 312.9h4M23 328.9h10M26 332.9h8M11 338.9h4M19 346.9h15M11 348.9h4M13 362.9h4M16 368.9h9M6 374.9h6M18 374.9h4M16 380.9h10M37 386.9h10M24 396.9h9M13 412.9h4M9 424.9h4M15 436.9h8M13 438.9h4M2 450.9h4M6 454.9h6M18 454.9h4M6 470.9h6M27 472.9h3M6 478.9h6M18 478.9h4"/><path stroke="#da70d6" d="M24 0.9h1M31 0.9h1M46 0.9h1M51 0.9h1M8 2.9h1M26 2.9h1M5 4.9h1M25 4.9h1M27 4.9h1M15 6.9h1M28 6.9h1M69 6.9h2M2 8.9h1M20 12.9h1M11 14.9h1M39 14.9h1M16 18.9h1M50 18.9h1M2 20.9h1M33 26.9h1M43 26.9h1M5 28.9h1M11 28.9h1M13 28.9h1M15 30.9h1M18 32.9h1M6 38.9h1M4 40.9h1M2 42.9h1M38 44.9h1M2 50.9h1M5 52.9h1M14 52.9h1M16 52.9h1M15 56.9h1M19 56.9h1M2 58.9h1M25 60.9h1M33 60.9h1M12 62.9h1M40 62.9h1M0 64.9h1M3 70.9h1M40 70.9h1M42 70.9h1M55 70.9h1M13 72.9h1M26 72.9h1M68 72.9h2M0 74.9h1M31 84.9h2M41 84.9h1M56 84.9h1M58 84.9h2M3 86.9h1M14 86.9h1M36 86.9h1M60 86.9h3M64 86.9h1M23 90.9h1M31 90.9h1M35 108.9h1M59 108.9h1M14 114.9h2M11 116.9h1M16 118.9h1M45 118.9h1M47 118.9h1M13 122.9h1M6 124.9h1M20 124.9h1M6 126.9h1M36 126.9h1M6 128.9h1M22 128.9h1M6 130.9h1M23 130.9h1M4 132.9h1M2 136.9h2M0 138.9h2M33 146.9h1M40 146.9h1M55 146.9h1M60 146.9h1M33 150.9h2M11 152.9h1M4 156.9h1M2 160.9h2M5 164.9h1M11 164.9h1M13 164.9h1M15 166.9h1M28 166.9h1M2 168.9h1M39 174.9h1M42 174.9h1M52 174.9h1M58 174.9h1M39 180.9h1M48 180.9h1M56 180.9h1M26 186.9h2M19 190.9h2M54 190.9h1M6 196.9h1M19 198.9h2M4 206.9h2M14 210.9h1M18 210.9h1M24 210.9h2M4 216.9h2M2 218.9h1M10 218.9h1M14 218.9h1M16 218.9h1M21 220.9h2M4 222.9h1M13 222.9h1M27 222.9h1M29 222.9h2M15 226.9h1M28 226.9h1M15 230.9h1M19 230.9h1M4 234.9h1M2 236.9h1M0 238.9h2M32 246.9h1M39 246.9h1M54 246.9h1M59 246.9h1M15 252.9h1M24 252.9h1M11 254.9h1M28 254.9h1M11 256.9h1M17 256.9h1M33 260.9h2M11 262.9h1M28 266.9h1M30 266.9h1M36 266.9h1M47 266.9h2M50 266.9h1M4 270.9h1M2 272.9h2M5 274.9h1M11 274.9h1M5 280.9h1M11 280.9h1M13 280.9h1M15 282.9h1M28 282.9h1M67 282.9h2M2 284.9h1M17 300.9h2M25 306.9h1M33 306.9h1M12 312.9h1M16 312.9h1M22 312.9h2M2 318.9h2M0 320.9h2M33 328.9h1M40 328.9h1M55 328.9h1M60 328.9h1M34 332.9h1M46 332.9h1M8 334.9h1M53 334.9h1M5 336.9h1M35 336.9h1M37 336.9h1M15 338.9h1M19 338.9h1M2 340.9h1M5 346.9h1M7 346.9h1M34 346.9h1M15 348.9h1M18 350.9h1M2 354.9h1M17 362.9h2M25 368.9h1M33 368.9h1M12 374.9h1M16 374.9h1M22 374.9h2M50 374.9h2M26 380.9h1M33 380.9h1M48 380.9h1M53 380.9h1M16 384.9h1M28 384.9h1M30 384.9h1M32 384.9h1M7 386.9h1M47 386.9h1M56 386.9h2M59 386.9h1M33 396.9h1M44 396.9h2M59 396.9h1M5 402.9h1M4 410.9h1M6 410.9h1M17 412.9h1M30 412.9h1M40 412.9h2M2 414.9h1M13 424.9h1M26 424.9h1M70 424.9h2M19 430.9h1M28 430.9h1M33 430.9h1M9 432.9h1M24 432.9h1M29 432.9h1M7 436.9h1M23 436.9h1M37 436.9h2M40 436.9h1M17 438.9h1M30 438.9h1M39 438.9h2M4 440.9h1M6 450.9h2M12 454.9h1M16 454.9h1M22 454.9h2M2 456.9h1M19 460.9h1M0 462.9h1M15 468.9h1M24 468.9h1M29 468.9h1M12 470.9h1M33 470.9h1M21 472.9h1M30 472.9h2M44 472.9h1M2 476.9h2M12 478.9h1M16 478.9h1M22 478.9h2M43 478.9h2"/><path stroke="#c586c0" d="M2 4.9h2M4 6.9h6M15 26.9h5M2 28.9h2M4 30.9h6M18 44.9h5M2 52.9h2M4 56.9h6M0 70.9h2M44 70.9h6M2 72.9h6M13 84.9h5M0 86.9h2M15 86.9h5M23 108.9h5M20 112.9h5M15 150.9h5M2 164.9h2M4 166.9h6M2 190.9h5M2 196.9h3M4 198.9h5M4 218.9h5M4 220.9h5M4 226.9h6M4 230.9h6M15 260.9h5M2 274.9h2M2 280.9h2M4 282.9h6M2 300.9h5M15 332.9h5M2 336.9h2M4 338.9h6M2 346.9h2M8 346.9h5M4 348.9h6M2 362.9h5M13 384.9h2M4 386.9h2M18 396.9h5M2 402.9h2M6 412.9h6M2 424.9h6M2 432.9h6M4 436.9h2M6 438.9h6M45 454.9h3"/><path stroke="#4ec9b0" d="M20 6.9h8M21 26.9h4M10 32.9h8M60 70.9h7M18 72.9h8M19 84.9h4M2 114.9h4M15 124.9h4M15 126.9h8M15 128.9h6M15 130.9h7M21 150.9h4M20 166.9h8M30 166.9h5M18 186.9h4M8 190.9h4M10 220.9h4M20 226.9h8M30 226.9h5M21 260.9h4M31 266.9h2M39 266.9h4M20 282.9h8M21 332.9h4M10 350.9h8M47 352.9h6M22 412.9h8M18 424.9h8M22 438.9h8M35 454.9h5M17 472.9h4M22 472.9h4"/><path stroke="#ce9178" d="M29 6.9h35M17 18.9h4M23 18.9h6M31 18.9h7M40 18.9h10M8 34.9h11M13 62.9h5M27 72.9h36M47 108.9h7M17 118.9h4M23 118.9h6M31 118.9h14M29 126.9h6M53 174.9h5M40 180.9h8M18 192.9h88M15 202.9h46M14 212.9h9M15 214.9h22M16 252.9h8M12 256.9h5M29 282.9h33M12 314.9h9M6 352.9h33M33 374.9h9M48 386.9h8M31 412.9h9M27 424.9h38M31 438.9h3M13 470.9h5M20 470.9h11M33 478.9h9"/><path stroke="#b5cea8" d="M66 6.9h3M37 14.9h1M8 36.9h3M65 72.9h3M56 108.9h3M40 174.9h2M31 186.9h2M36 186.9h2M41 186.9h4M15 210.9h3M64 282.9h3M13 312.9h3M41 352.9h3M13 374.9h3M67 424.9h3M36 438.9h3M13 454.9h3M35 472.9h2M40 472.9h4M13 478.9h3"/><path stroke="#6a9955" d="M2 24.9h38M4 54.9h17M0 68.9h59M0 78.9h60M0 80.9h68M0 98.9h14M0 100.9h7M0 102.9h6M0 106.9h27M2 134.9h8M0 142.9h18M2 148.9h33M2 172.9h34M2 178.9h38M2 184.9h30M2 188.9h7M6 232.9h54M0 242.9h17M2 248.9h33M2 278.9h49M2 288.9h55M2 304.9h31M2 310.9h31M0 324.9h18M2 330.9h30M2 344.9h49M2 358.9h28M37 360.9h23M2 366.9h25M2 372.9h17M0 378.9h45M2 388.9h53M2 394.9h40M2 400.9h29M2 418.9h65M0 428.9h32M4 434.9h35M4 442.9h38M4 444.9h38M2 448.9h34M2 458.9h25M0 466.9h9"/></svg><!--MM1-->
<div class="abs" style="left:1004px;top:0;width:14px;height:481px;border-left:1px solid #2c2c2c;border-top:1px solid #2c2c2c"></div>
<div class="abs" style="left:1004px;top:111px;width:14px;height:17px;background:#4a4a4a"></div>
<div class="abs" style="left:1004px;top:118px;width:14px;height:2px;background:#8a8a8a"></div>
</div>
<div id="panel">
<div class="pt" style="left:19.9px;letter-spacing:-0.622px">PROBLEMS</div>
<div class="pt" style="left:98.1px;letter-spacing:-0.527px">OUTPUT</div>
<div class="pt" style="left:163.1px;letter-spacing:-0.556px">DEBUG CONSOLE</div>
<div class="pt act" style="left:272.3px;letter-spacing:-0.285px">TERMINAL</div>
<div class="pt" style="left:347.9px;letter-spacing:-0.883px">PORTS</div>
<div class="abs" style="left:270px;top:28px;width:56px;height:1px;background:#e7e7e7"></div>
<svg class="abs" style="left:749px;top:10px" width="15" height="14" viewBox="0 0 15 14" fill="none" stroke="#c5c5c5" stroke-width="1.200" stroke-linecap="round" stroke-linejoin="round"><rect x="0.700" y="0.700" width="13.600" height="12.600" rx="2.200"/><path d="M3.500 4.200 6.300 7 3.500 9.800M7.500 10h3.500"/></svg>
<div class="abs" style="left:768.7px;top:6px;line-height:22px;font-size:11.500px;color:#cccccc;letter-spacing:-0.308px;white-space:nowrap">powershell</div>
<svg class="abs" style="left:832px;top:10px" width="14" height="14" viewBox="0 0 14 14" fill="none" stroke="#c5c5c5" stroke-width="1.200" stroke-linecap="round"><path d="M7 0.800v12.400M0.800 7h12.400"/></svg>
<svg class="abs" style="left:850px;top:13px" width="10" height="8" viewBox="0 0 10 8" fill="none" stroke="#c5c5c5" stroke-width="1.200" stroke-linecap="round" stroke-linejoin="round"><path d="M1.200 2l3.800 3.800L8.800 2"/></svg>
<svg class="abs" style="left:870px;top:10px" width="16" height="15" viewBox="0 0 16 15" fill="none" stroke="#c5c5c5" stroke-width="1.200"><rect x="0.800" y="0.800" width="14.400" height="13.400" rx="2.200"/><path d="M8 0.800v13.400"/></svg>
<svg class="abs" style="left:897px;top:9.500px" width="14" height="16" viewBox="0 0 14 16" fill="none" stroke="#c5c5c5" stroke-width="1.200" stroke-linecap="round" stroke-linejoin="round"><path d="M1 3.200h12M4.800 3V1.800a1 1 0 0 1 1-1h2.400a1 1 0 0 1 1 1V3M2.300 3.400l.7 10.200a1.500 1.500 0 0 0 1.500 1.400h5a1.500 1.500 0 0 0 1.500-1.400l.7-10.200M5.500 6v6M8.500 6v6"/></svg>
<svg class="abs" style="left:924px;top:16px" width="12" height="4" viewBox="0 0 12 4"><circle cx="1.500" cy="2" r="1.100" fill="#c5c5c5"/><circle cx="6" cy="2" r="1.100" fill="#c5c5c5"/><circle cx="10.500" cy="2" r="1.100" fill="#c5c5c5"/></svg>
<div class="abs" style="left:949px;top:10px;width:1px;height:16px;background:#5a5a5a"></div>
<svg class="abs" style="left:962px;top:11px" width="14" height="12" viewBox="0 0 14 12" fill="none" stroke="#c5c5c5" stroke-width="1.200" stroke-linecap="round" stroke-linejoin="round"><path d="M0.700 3.800V2a1.300 1.300 0 0 1 1.300-1.300h2.300M9.700 0.700H12A1.300 1.300 0 0 1 13.300 2v1.800M13.300 8.200V10a1.300 1.300 0 0 1-1.300 1.300H9.700M4.300 11.300H2A1.300 1.300 0 0 1 0.700 10V8.200"/></svg>
<svg class="abs" style="left:990px;top:12px" width="10" height="10" viewBox="0 0 10 10" fill="none" stroke="#c5c5c5" stroke-width="1.200" stroke-linecap="round"><path d="M0.700 0.700l8.600 8.600M9.300 0.700 0.700 9.300"/></svg>
<div class="abs" style="left:20px;top:47px;line-height:19px;font-family:'Liberation Mono',monospace;font-size:12.830px;letter-spacing:-0.700px;color:#cccccc;white-space:pre">PS C:\BiddingModBackend-major (2)&gt;</div>
<div class="abs" style="left:725px;top:76px;font-size:20px;line-height:24px;color:#777777;letter-spacing:-0.071px;white-space:nowrap">Activate Windows</div>
<div class="abs" style="left:725px;top:102px;font-size:15px;line-height:18px;color:#707070;letter-spacing:-0.039px;white-space:nowrap">Go to Settings to activate Windows.</div>
<div class="abs" style="left:1004px;top:48px;width:14px;height:85px;border-left:1px solid #333333"></div>
</div>
<div id="status">
<svg class="abs" style="left:9px;top:5px" width="14" height="13" viewBox="0 0 14 13" fill="none" stroke="#ffffff" stroke-width="1.400" stroke-linecap="round" stroke-linejoin="round"><path d="M1.500 5.500l4.500 3.300-4.500 3.400M12.500 0.800 8 4.100l4.500 3.300"/></svg>
<svg class="abs" style="left:46px;top:5px" width="17" height="14" viewBox="0 0 17 14" fill="none" stroke="#ffffff" stroke-width="1.300" stroke-linecap="round" stroke-linejoin="round"><path d="M7.500 10.500H4.300a3.300 3.300 0 0 1-.3-6.600 4.300 4.300 0 0 1 8.300.8 2.600 2.600 0 0 1 2 .9"/><circle cx="11.800" cy="9.500" r="3.900" fill="#ffffff" stroke="none"/><path d="M11.800 11.700V7.600M10.200 9l1.600-1.600L13.400 9" stroke="#007acc" stroke-width="1"/></svg>
<svg class="abs" style="left:78.500px;top:4px" width="15" height="15" viewBox="0 0 15 15" fill="none" stroke="#ffffff" stroke-width="1.200" stroke-linecap="round"><circle cx="7.500" cy="7.500" r="6.500"/><path d="M5 5l5 5M10 5l-5 5"/></svg>
<span style="left:97.4px;font-size:12px;letter-spacing:-0.487px;">0</span><svg class="abs" style="left:107.500px;top:4px" width="16" height="15" viewBox="0 0 16 15" fill="none" stroke="#ffffff" stroke-width="1.200" stroke-linecap="round" stroke-linejoin="round"><path d="M8 1.300 14.800 13.300H1.200z"/><path d="M8 5.800v3.700M8 11.300v.3"/></svg>
<span style="left:126.5px;font-size:12px;letter-spacing:-0.487px;">0</span><svg class="abs" style="left:148px;top:3.500px" width="16" height="15" viewBox="0 0 16 15" fill="none" stroke="#ffffff" stroke-width="1.300" stroke-linecap="round" stroke-linejoin="round"><path d="M6.500 2.300H3.300A2 2 0 0 0 1.300 4.300v7.400a2 2 0 0 0 2 2h7.400a2 2 0 0 0 2-2v-1.200"/><path d="M10 1l4.700 4L10 9V6.800C7.500 6.800 5.800 7.800 4.800 10 5 6.300 6.800 3.600 10 3.300z"/></svg>
<span style="left:168px;font-size:12px;letter-spacing:-0.438px;">Live Share</span><svg class="abs" style="left:239px;top:4px" width="14" height="14" viewBox="0 0 14 14" fill="none" stroke="#ffffff" stroke-width="1.300" stroke-linecap="round"><path d="M3.500 2.300A6 6 0 0 1 12.800 8.500"/></svg>
<span style="left:257.2px;font-size:12px;letter-spacing:-0.077px;">Analyzing 'auth.js' and its dependencies</span><span style="left:981.2px;font-size:12px;letter-spacing:-0.284px;">Ln 178, Col 7</span><span style="left:1065px;font-size:12px;letter-spacing:-0.564px;">Spaces: 2</span><span style="left:1130px;font-size:12px;letter-spacing:-0.54px;">UTF-8</span><span style="left:1177.4px;font-size:11.5px;letter-spacing:-0.908px;">CRLF</span><svg class="abs" style="left:1220px;top:5px" width="14" height="14" viewBox="0 0 14 14" fill="none" stroke="#d0e6f7" stroke-width="1.300" stroke-linecap="round"><path d="M2.200 3.500A6 6 0 0 0 11 11"/></svg>
<span style="left:1241.8px;font-size:12px;letter-spacing:-0.383px;">JavaScript</span><svg class="abs" style="left:1309px;top:3px" width="18" height="16" viewBox="0 0 18 16"><path d="M4.800 1h2.400q1.800 0 1.800 1.600 0-1.600 1.800-1.600h2.400q2 0 2.300 2.200l.400 2.800q1.300.700 1.300 2.100v2.200Q14.500 14.800 9 14.800T.800 10.300V8.100q0-1.400 1.300-2.100l.400-2.800Q2.800 1 4.800 1z" fill="#ffffff"/><rect x="4.300" y="2.900" width="3.300" height="3" rx="1.200" fill="#007acc"/><rect x="10.400" y="2.900" width="3.300" height="3" rx="1.200" fill="#007acc"/><path d="M4 8h10v3.300q-2 1.400-5 1.400t-5-1.400z" fill="#007acc"/><rect x="6.400" y="9" width="1.500" height="2.400" fill="#ffffff"/><rect x="10.100" y="9" width="1.500" height="2.400" fill="#ffffff"/><path d="M3.600 1.600 15.400 14.600" stroke="#007acc" stroke-width="2.600"/><path d="M3 1.600 14.800 14.600" stroke="#ffffff" stroke-width="1.100" stroke-linecap="round"/></svg>
<svg class="abs" style="left:1343px;top:3.500px" width="16" height="16" viewBox="0 0 16 16" fill="none" stroke="#ffffff" stroke-width="1.500" stroke-linecap="round" stroke-linejoin="round"><path d="M8.800 1.700A4.400 4.400 0 0 0 3.200 6v3.200L1.500 12.300h11.400l-1.600-3V8"/><path d="M5.800 13.200a1.500 1.500 0 0 0 2.900 0" stroke-width="1.300"/><circle cx="11.500" cy="3.600" r="3.600" fill="#ffffff" stroke="#007acc" stroke-width="1.200"/></svg>
</div>
<div id="taskbar">
<svg class="abs" style="left:16px;top:11.500px" width="17" height="17" viewBox="0 0 17 17" fill="#ffffff"><path d="M0 2.300 6.400 1.400V7.900H0zM7.300 1.250 16.400 0V7.900H7.300zM0 8.800H6.400v6.500L0 14.400zM7.300 8.800h9.100v7.900L7.300 15.450z"/></svg>
<div class="abs" style="left:48px;top:0;width:288px;height:40px;background:#f3f3f3;border-top:1px solid #e0e0e0;overflow:hidden">
<svg class="abs" style="left:11px;top:10px" width="19" height="19" viewBox="0 0 19 19" fill="none" stroke="#2b2b2b" stroke-width="1.400" stroke-linecap="round"><circle cx="11.600" cy="7" r="5.500"/><path d="M7.700 11 1.300 17.600"/></svg>
<div class="abs" style="left:41px;top:10px;font-size:15px;line-height:20px;color:#3b3b3b;letter-spacing:-0.32px;white-space:nowrap">Type here to search</div>
<svg class="abs" style="left:200px;top:0" width="88" height="39" viewBox="248 729 88 39"><ellipse cx="305" cy="780" rx="58" ry="21" fill="#4a9a35"/><ellipse cx="308" cy="784" rx="42" ry="21" fill="#86c767" opacity="0.600"/><path d="M277.500 758.600 297 755.600M277.800 756.500v3.500M284.500 755.500v4" stroke="#b9814a" stroke-width="1.400" fill="none"/><path d="M297 754.500l2.500 6.500M299 756.500l5.500 3 4 8.500" stroke="#a8652a" stroke-width="2.600" fill="none" stroke-linecap="round"/><path d="M275.500 746 269.500 755.500M278 747.500 272 759" stroke="#34367a" stroke-width="2" stroke-linecap="round"/><path d="M298 747.500 306.500 753.500" stroke="#34367a" stroke-width="2" stroke-linecap="round"/><ellipse cx="287.500" cy="741.500" rx="16" ry="9.800" fill="#d6d2cd"/><ellipse cx="283" cy="738" rx="10" ry="6" fill="#e6e3df"/><circle cx="272.500" cy="737.500" r="2.800" fill="#e0ddd9"/><ellipse cx="304" cy="741.500" rx="6.200" ry="4.600" fill="#2f2f7a" transform="rotate(15 304 741.500)"/><path d="M305 735.500l4-1.500-2 3.500z" fill="#cfcac5"/><path d="M318 732.800a7.800 7.800 0 1 1 0 14.800 8.500 8.500 0 0 0 0-14.800z" fill="#f2c23e"/><path d="M263 736.300l.9 2.100 2.100.9-2.100.9-.900 2.100-.900-2.100-2.100-.900 2.100-.900z" fill="#f0d44a"/><path d="M326 753l.7 1.500 1.500.7-1.500.7-.700 1.500-.700-1.500-1.500-.700 1.500-.700z" fill="#e9dc6a"/><circle cx="268" cy="736" r="0.700" fill="#f0d44a"/><circle cx="319.500" cy="755" r="0.600" fill="#e9dc6a"/></svg>
</div>
<svg class="abs" style="left:351px;top:11px" width="18" height="17" viewBox="351 739 18 17" fill="none" stroke="#ffffff" stroke-width="1.100"><rect x="352.500" y="744.500" width="10.500" height="6"/><path d="M352.500 740v2h10.500v-2M352.500 755v-2.200h10.500v2.200M366.700 739.800v4.200M366.700 747.500v7.500"/><rect x="365.500" y="744.300" width="2.400" height="2.600" fill="#ffffff" stroke="none"/></svg>
<svg class="abs" style="left:399px;top:9px" width="24" height="22" viewBox="0 0 24 22"><defs><linearGradient id="cpa" x1="0" y1="0" x2="0" y2="1"><stop offset="0" stop-color="#1e8ff0"/><stop offset="0.450" stop-color="#35c27a"/><stop offset="0.800" stop-color="#f5d21a"/><stop offset="1" stop-color="#f59a1a"/></linearGradient><linearGradient id="cpb" x1="0" y1="0" x2="0" y2="1"><stop offset="0" stop-color="#9a5cf0"/><stop offset="0.450" stop-color="#e45aa8"/><stop offset="1" stop-color="#ff8a3c"/></linearGradient></defs><path d="M6.500 0.800h7.500c1.200 0 1.800.6 1.400 1.800L12 14.500c-.4 1.200-1.300 1.800-2.500 1.800H3.300C1.700 16.300.600 15 1 13.300L4 2.600C4.300 1.400 5.200.800 6.500.800z" fill="url(#cpa)"/><path d="M14.500 5.200h5.700c1.700 0 2.800 1.300 2.400 3l-2.600 10.300c-.3 1.300-1.200 2-2.500 2h-7c-1.300 0-1.800-.8-1.400-1.900l3-11.500c.300-1.200 1.200-1.900 2.400-1.900z" fill="url(#cpb)"/><path d="M14 1c1.800 0 2.300 1.200 2.600 2.300l.6 1.900h-2.700c-1.200 0-2.100.7-2.400 1.900l-1 3.900z" fill="#1657c8"/><path d="M9.500 20.500c-1.400 0-2-1-2.400-2.200l-.5-2h2.900c1.200 0 2.100-.6 2.500-1.800l.9-3.300z" fill="#f2562a"/></svg>
<svg class="abs" style="left:448px;top:10px" width="24" height="20" viewBox="0 0 24 20"><path d="M1 2.500a1.500 1.500 0 0 1 1.500-1.500h6l2 2.300H1z" fill="#e8a33a"/><path d="M1 3h20.500a1.500 1.500 0 0 1 1.500 1.500v13a1.500 1.500 0 0 1-1.500 1.500H2.500A1.500 1.500 0 0 1 1 17.500z" fill="#f9d04c"/><path d="M1 5h22v1.500H1z" fill="#fbe08a"/><path d="M5.500 12.500a2 2 0 0 1 2-2h9a2 2 0 0 1 2 2V19h-13z" fill="#3a8ee0"/><path d="M9 14.500h6V19H9z" fill="#f9d04c"/></svg>
<svg class="abs" style="left:496px;top:7px" width="28" height="28" viewBox="-13 -13 28 28"><circle r="12" fill="#ffffff"/><path d="M0 0 L-10.390 -6 A12 12 0 0 1 10.390 -6 Z" fill="#ea4335"/><path d="M0 0 L10.390 -6 A12 12 0 0 1 0 12 Z" fill="#fbbc04"/><path d="M0 0 L0 12 A12 12 0 0 1 -10.390 -6 Z" fill="#34a853"/><circle r="5.600" fill="#ffffff"/><circle r="4.500" fill="#4285f4"/><circle cx="6.300" cy="6.300" r="6.200" fill="#5c6bc0"/><text x="6.300" y="9.100" font-family="Liberation Sans, sans-serif" font-size="7.800" font-weight="700" fill="#ffffff" text-anchor="middle">D</text></svg>
<svg class="abs" style="left:545px;top:8px" width="26" height="24" viewBox="0 0 26 24"><defs><linearGradient id="edg" x1="0" y1="0" x2="1" y2="1"><stop offset="0" stop-color="#35c1f1"/><stop offset="0.500" stop-color="#1b9de2"/><stop offset="1" stop-color="#0c59a4"/></linearGradient><linearGradient id="edg2" x1="0" y1="0" x2="1" y2="0"><stop offset="0" stop-color="#2fb7e8"/><stop offset="1" stop-color="#54d86a"/></linearGradient></defs><circle cx="13" cy="12" r="11.500" fill="url(#edg)"/><path d="M1.800 10.500C2.500 4.800 7.300.500 13 .500c6.500 0 11.500 4.600 11.500 10 0 3-2.300 5-5.200 5-2.600 0-3.700-1.200-3.500-2.200.2-.8.900-1.300.9-2.800 0-2.300-2.300-4.300-5.400-4.300-4 0-7.700 2.300-9.500 4.300z" fill="url(#edg2)"/><path d="M9.800 12.500c-.5 1.500-.3 4 1.200 6.200 1.800 2.600 5 3.800 8 3.300-2 1.200-4 1.500-6 1.500-5 0-9-3-10.800-7 1.500-3 4.500-4.500 7.600-4z" fill="#0d4fa0"/><ellipse cx="16.500" cy="13.800" rx="4.200" ry="3.200" fill="#33282a"/></svg>
<svg class="abs" style="left:594px;top:8px" width="25" height="24" viewBox="0 0 25 24"><path d="M8 6.500V3.800A1.800 1.800 0 0 1 9.800 2h5.400A1.800 1.800 0 0 1 17 3.800v2.700" fill="none" stroke="#2d9be0" stroke-width="1.700"/><path d="M1 6h23v14.500a3 3 0 0 1-3 3H4a3 3 0 0 1-3-3z" fill="#f4f4f4"/><path d="M1 6h23v2H1z" fill="#e2e8ee"/><rect x="7.300" y="10" width="4.600" height="4.600" fill="#f25022"/><rect x="13" y="10" width="4.600" height="4.600" fill="#7fba00"/><rect x="7.300" y="15.700" width="4.600" height="4.600" fill="#00a4ef"/><rect x="13" y="15.700" width="4.600" height="4.600" fill="#ffb900"/></svg>
<svg class="abs" style="left:643px;top:8px" width="26" height="24" viewBox="-13 -12 26 24" fill="none" stroke="#5fd3ee" stroke-width="1.500"><ellipse rx="11.500" ry="4.400"/><ellipse rx="11.500" ry="4.400" transform="rotate(60)"/><ellipse rx="11.500" ry="4.400" transform="rotate(120)"/><circle r="2.300" fill="#5fd3ee" stroke="none"/></svg>
<svg class="abs" style="left:692px;top:7px" width="28" height="28" viewBox="-13 -13 28 28"><circle r="12" fill="#ffffff"/><path d="M0 0 L-10.390 -6 A12 12 0 0 1 10.390 -6 Z" fill="#ea4335"/><path d="M0 0 L10.390 -6 A12 12 0 0 1 0 12 Z" fill="#fbbc04"/><path d="M0 0 L0 12 A12 12 0 0 1 -10.390 -6 Z" fill="#34a853"/><circle r="5.600" fill="#ffffff"/><circle r="4.500" fill="#4285f4"/><circle cx="6.300" cy="6.300" r="6.200" fill="#8d6e63"/><text x="6.300" y="9.100" font-family="Liberation Sans, sans-serif" font-size="7.800" font-weight="700" fill="#ffffff" text-anchor="middle">D</text></svg>
<svg class="abs" style="left:741px;top:7px" width="26" height="26" viewBox="-13 -13 26 26"><circle r="12.200" fill="#ff6c37"/><path d="M-6.800 6.800 -4.800 2.500 2.500 -4.800 4.800 -2.500 -2.500 4.800z" fill="#ffffff"/><path d="M3.300 -5.600 5.600 -3.300" stroke="#ffffff" stroke-width="1.200" stroke-linecap="round"/><circle cx="6.300" cy="-6.300" r="1.700" fill="none" stroke="#ffffff" stroke-width="1"/><path d="M-6.800 6.800 -3 5" stroke="#ff6c37" stroke-width="0.700"/></svg>
<div class="abs" style="left:779px;top:0;width:48px;height:40px;background:rgba(255,255,255,0.160)"></div>
<svg class="abs" style="left:791px;top:7.500px" width="25" height="25" viewBox="0 0 100 100"><path d="M96.500 10.800 75.900.900a6.200 6.200 0 0 0-7.100 1.200L29.400 38 12.200 25a4.200 4.200 0 0 0-5.300.200L1.400 30.200a4.200 4.200 0 0 0 0 6.200L16.300 50 1.400 63.600a4.200 4.200 0 0 0 0 6.200l5.500 5a4.200 4.200 0 0 0 5.300.2l17.200-13 39.400 35.900a6.200 6.200 0 0 0 7.100 1.200l20.600-9.900A6.200 6.200 0 0 0 100 83.600V16.400a6.200 6.200 0 0 0-3.500-5.600zM75 72.700 45.100 50 75 27.300z" fill="#1f9cf0"/><path d="M75.900.900a6.200 6.200 0 0 0-7.100 1.200L29.400 38 45.100 50 75 27.300V72.700L45.100 50 29.400 62l39.400 35.900a6.200 6.200 0 0 0 7.100 1.200L75 99z" fill="#0065a9" opacity="0.550"/></svg>
<div class="abs" style="left:488.8px;top:37.500px;width:40.4px;height:2.500px;background:#76b9ed"></div>
<div class="abs" style="left:685px;top:37.500px;width:39.7px;height:2.500px;background:#76b9ed"></div>
<div class="abs" style="left:733.8px;top:37.500px;width:40.0px;height:2.500px;background:#76b9ed"></div>
<div class="abs" style="left:779px;top:37.500px;width:48.0px;height:2.500px;background:#76b9ed"></div>
<svg class="abs" style="left:1015px;top:6px" width="26" height="28" viewBox="1015 734 26 28"><defs><linearGradient id="mo" x1="0" y1="0" x2="1" y2="0"><stop offset="0" stop-color="#ef7f1e"/><stop offset="1" stop-color="#f9b233"/></linearGradient></defs><path d="M1016 751.500C1020.500 752.800 1026.500 750.500 1030 744L1037.800 743C1040 750 1036 757.500 1028.500 759.200 1022 760.300 1017.300 756.500 1016 751.500Z" fill="url(#mo)"/><circle cx="1032.800" cy="741.400" r="5.600" fill="#d9302c"/><text x="1032.800" y="744.500" font-family="Liberation Sans, sans-serif" font-size="8.500" font-weight="700" fill="#ffffff" text-anchor="middle">4</text></svg>
<div class="abs" style="left:1047.2px;top:10px;font-size:14px;line-height:20px;color:#ffffff;letter-spacing:-0.595px;white-space:nowrap">26°C</div>
<div class="abs" style="left:1085px;top:10px;font-size:14px;line-height:20px;color:#ffffff;letter-spacing:-0.454px;white-space:nowrap">Clear</div>
<svg class="abs" style="left:1140px;top:15px" width="15" height="10" viewBox="0 0 15 10" fill="none" stroke="#ffffff" stroke-width="1.300"><path d="M1 8.500 7.300 2.200l6.300 6.300"/></svg>
<svg class="abs" style="left:1165px;top:13px" width="16" height="15" viewBox="0 0 16 15" fill="none" stroke-linecap="round"><path d="M1.500 13.500A11.500 11.500 0 0 1 13 2" stroke="#9a9a9a" stroke-width="1.200"/><path d="M4.500 13.500A8.500 8.500 0 0 1 13 5" stroke="#ffffff" stroke-width="1.200"/><path d="M7.500 13.500A5.500 5.500 0 0 1 13 8" stroke="#ffffff" stroke-width="1.200"/><circle cx="12.300" cy="12.600" r="1.500" fill="#ffffff"/></svg>
<svg class="abs" style="left:1187px;top:13px" width="18" height="15" viewBox="0 0 18 15" fill="none" stroke="#ffffff" stroke-width="1.100" stroke-linejoin="round" stroke-linecap="round"><path d="M1 5h2.800L7.500 1.500v12L3.800 10H1z"/><path d="M9.800 5a3.500 3.500 0 0 1 0 5M12 3a6.300 6.300 0 0 1 0 9M14.300 1.200a9 9 0 0 1 0 12.600"/></svg>
<div class="abs" style="left:1213.4px;top:1.5px;font-size:12px;line-height:20px;color:#ffffff;letter-spacing:-1.205px;white-space:nowrap">ENG</div>
<div class="abs" style="left:1218.2px;top:18.5px;font-size:12px;line-height:20px;color:#ffffff;letter-spacing:-1.386px;white-space:nowrap">US</div>
<div class="abs" style="left:1264.3px;top:1.5px;font-size:12px;line-height:20px;color:#ffffff;letter-spacing:-0.626px;white-space:nowrap">21:16</div>
<div class="abs" style="left:1249.8px;top:18.5px;font-size:12px;line-height:20px;color:#ffffff;letter-spacing:-0.419px;white-space:nowrap">13-03-2026</div>
<svg class="abs" style="left:1324px;top:11px" width="18" height="18" viewBox="0 0 18 18" fill="none" stroke="#ffffff" stroke-width="1.200" stroke-linejoin="miter"><path d="M1.200 1.200h15.600v11.600H11L9 15.800 7 12.800H1.200z"/></svg>
<div class="abs" style="left:1361px;top:0;width:1px;height:40px;background:#6a6666"></div>
</div>
</body>
</html>
